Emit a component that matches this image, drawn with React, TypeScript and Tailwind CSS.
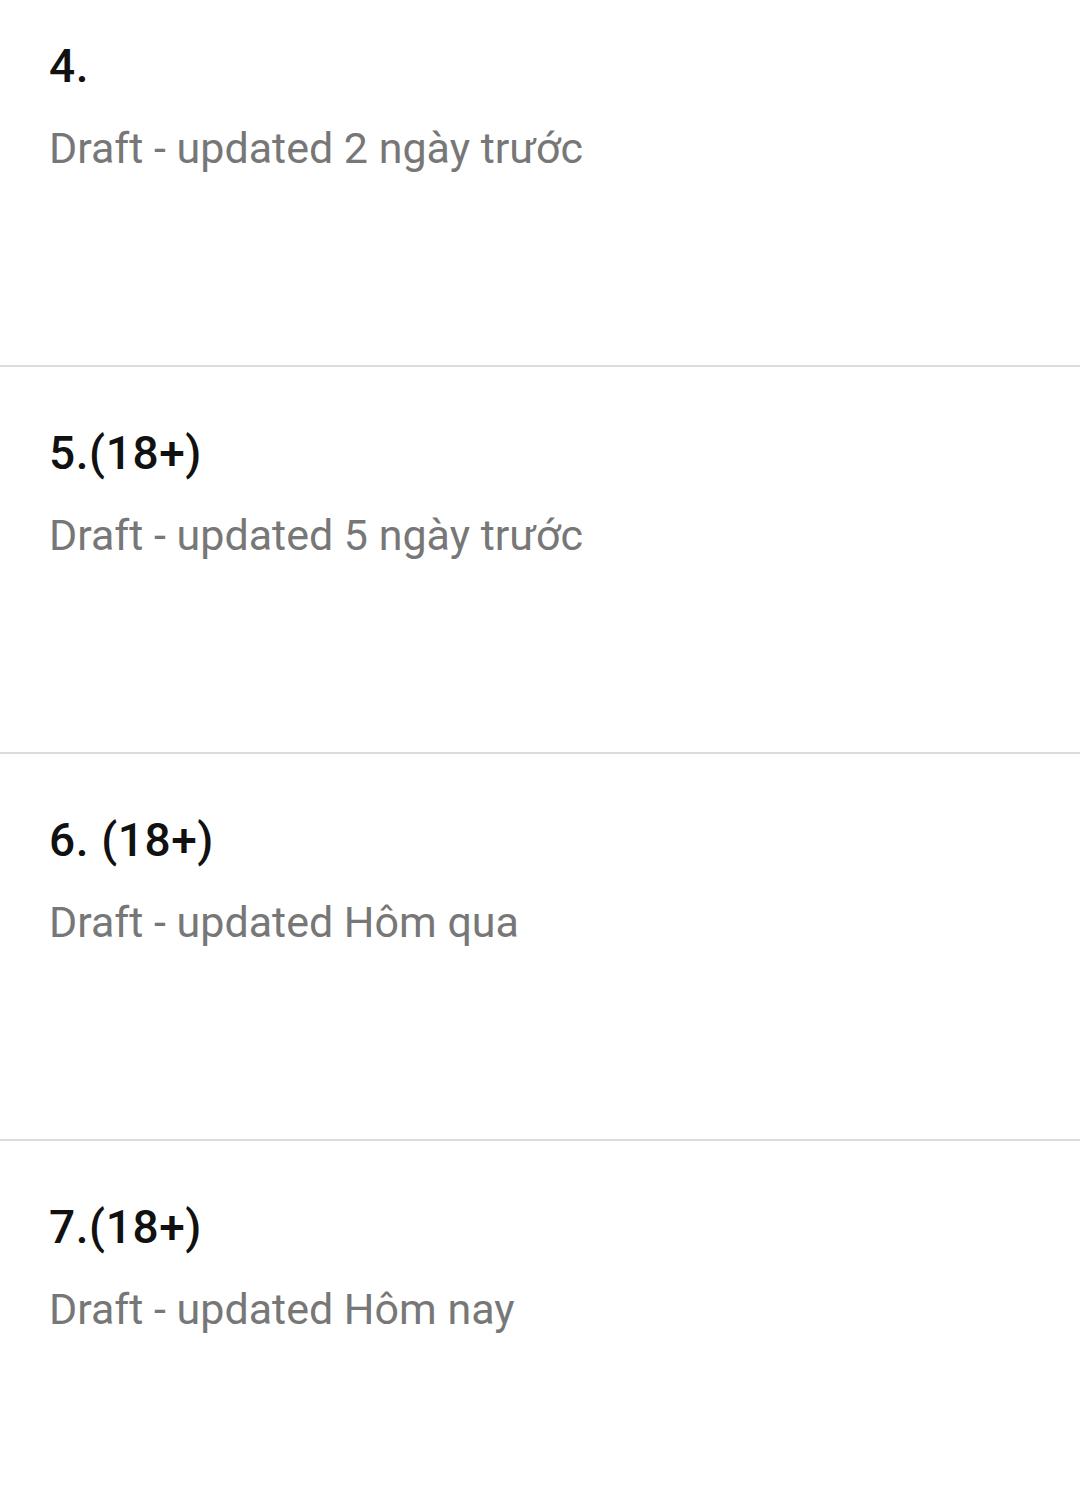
const drafts = [
  { title: "4.", updated: "2 ngày trước" },
  { title: "5.(18+)", updated: "5 ngày trước" },
  { title: "6. (18+)", updated: "Hôm qua" },
  { title: "7.(18+)", updated: "Hôm nay" },
];

export default function App() {
  return (
    <div className="h-[1503px] overflow-hidden bg-white font-['Roboto',sans-serif]">
      <ul className="-mt-[20px]">
        {drafts.map((d) => (
          <li key={d.title} className="h-[387px] border-b-2 border-[#dcdcdc] px-[49px] pt-[59px]">
            <p className="text-[46px] leading-[54px] font-medium tracking-[0.6px] text-[#111]">{d.title}</p>
            <p className="mt-[30px] text-[43px] leading-[50px] text-[#777]">
              Draft - updated {d.updated}
            </p>
          </li>
        ))}
      </ul>
    </div>
  );
}
